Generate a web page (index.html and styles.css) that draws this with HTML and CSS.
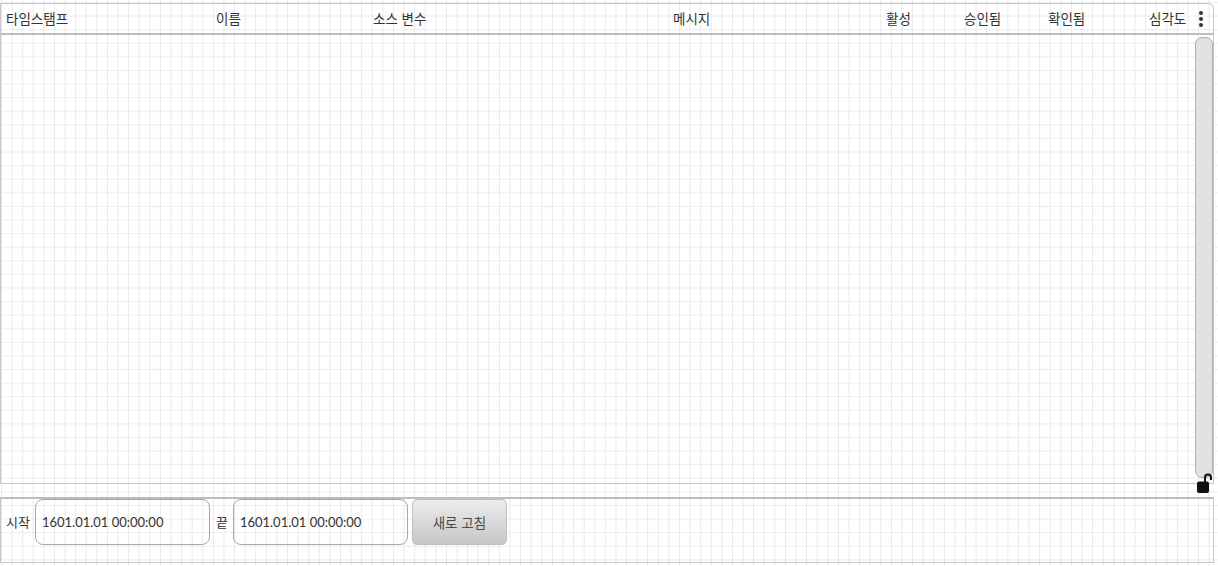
FILE: index.html
```html
<!DOCTYPE html>
<html lang="ko">
  <head>
    <meta charset="UTF-8" />
    <title>알람 기록</title>
    <link rel="stylesheet" href="styles.css">
  </head>
  <body>
    <!-- Alarm table -->
    <div class="table">
      <div class="head">
        <div class="col">타임스탬프</div>
        <div class="col">이름</div>
        <div class="col">소스 변수</div>
        <div class="col">메시지</div>
        <div class="col">활성</div>
        <div class="col">승인됨</div>
        <div class="col">확인됨</div>
        <div class="col">심각도</div>
        <div class="menu">
          <svg width="6" height="18" viewBox="0 0 6 18">
            <circle cx="3" cy="3" r="2" fill="#333" />
            <circle cx="3" cy="9" r="2" fill="#333" />
            <circle cx="3" cy="15" r="2" fill="#333" />
          </svg>
        </div>
      </div>
      <div class="body">
        <div class="rows"></div>
        <div class="scroll"></div>
      </div>
      <!-- scroll lock -->
      <svg class="lock" width="17" height="22" viewBox="0 0 17 22">
        <path d="M9 11 V5.5 a3 3 0 0 1 6 0 V8" fill="none" stroke="#111" stroke-width="2" />
        <rect x="1" y="9.5" width="12" height="11.5" rx="2" fill="#111" />
      </svg>
    </div>

    <!-- Range footer -->
    <div class="footer">
      <span class="label">시작</span>
      <input class="date" type="text" value="1601.01.01 00:00:00" />
      <span class="label">끝</span>
      <input class="date" type="text" value="1601.01.01 00:00:00" />
      <button class="refresh">새로 고침</button>
    </div>
  </body>
</html>
```

FILE: styles.css
```css
* {
  box-sizing: border-box;
}
html,
body {
  margin: 0;
  padding: 0;
  height: 100%;
  overflow: hidden;
}
body {
  padding-top: 3px;
  font-family: "Noto Sans CJK KR", "Noto Sans", sans-serif;
  font-size: 13px;
  color: #333;
  background-color: #ffffff;
  background-image:
    linear-gradient(to right, #e9e9e9 1px, transparent 1px),
    linear-gradient(to bottom, #ececec 1px, transparent 1px);
  background-size: 10.6px 13.6px;
  background-position: 1px 2px;
}
.table {
  position: relative;
  height: 481px;
  margin-right: 4px;
  border: 1px solid #c6c6c6;
  border-top-right-radius: 6px;
  display: flex;
  flex-direction: column;
}
.head {
  display: grid;
  grid-template-columns: 210px 157px 300px 213px 78px 84px 101px 1fr 20px;
  height: 31px;
  border-bottom: 2px solid #bdbdbd;
  align-items: center;
  font-size: 13.5px;
}
.col {
  padding-left: 5px;
  white-space: nowrap;
  line-height: 29px;
}
.menu {
  display: flex;
  justify-content: center;
  padding-right: 4px;
}
.body {
  flex: 1;
  display: flex;
}
.rows {
  flex: 1;
}
.scroll {
  width: 18px;
  margin: 2px 0 5px 0;
  border: 1px solid #b0b0b0;
  border-radius: 7px;
  background-color: #e2e2e2;
}
.lock {
  position: absolute;
  right: 0;
  bottom: -11px;
}
.footer {
  height: 66px;
  margin: 13px 4px 0 0;
  border: 1px solid #c6c6c6;
  border-top: 2px solid #bdbdbd;
  display: flex;
  align-items: flex-start;
  padding-left: 5px;
}
.label {
  line-height: 46px;
  margin-right: 5px;
}
.date {
  width: 175px;
  height: 46px;
  margin: 0 6px 0 0;
  padding: 0 6px;
  border: 1px solid #a8a8a8;
  border-radius: 8px;
  background: transparent;
  font-family: Lato, sans-serif;
  font-size: 13px;
  color: #333;
  outline: none;
}
.refresh {
  width: 95px;
  height: 46px;
  margin-left: -2px;
  border: 1px solid #c0c0c0;
  border-radius: 5px;
  background: linear-gradient(to bottom, #ececec, #c6c6c6);
  font-family: "Noto Sans CJK KR", sans-serif;
  font-size: 13.5px;
  color: #4a4a4a;
}
```
